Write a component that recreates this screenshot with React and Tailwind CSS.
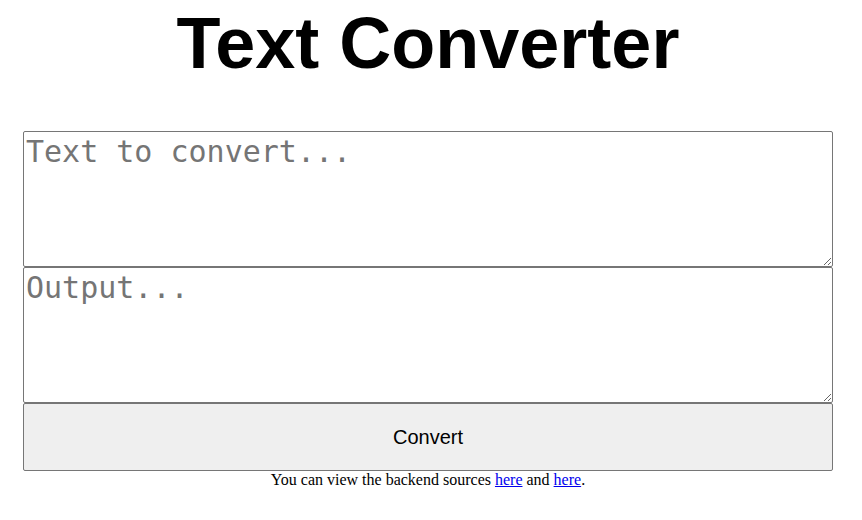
import { useState } from "react";

function App() {
  const [input, setInput] = useState("");
  const [output, setOutput] = useState("");

  const handleConvert = () => {
    setOutput(input);
  };

  return (
    <div className="w-[810px] ml-[23px] bg-white">
      <h1 className="m-0 pt-[2px] text-center text-[72px] font-bold leading-[normal] text-black font-['Liberation_Sans',Arial,sans-serif]">
        Text Converter
      </h1>

      <div className="mt-[47px] flex flex-col">
        <textarea
          value={input}
          onChange={(e) => setInput(e.target.value)}
          placeholder="Text to convert..."
          className="block w-[810px] h-[136px] border border-[#767676] rounded-[2px] p-[2px] text-[30px] leading-[normal] text-black placeholder:text-[#757575] font-['DejaVu_Sans_Mono',monospace] resize"
        />
        <textarea
          value={output}
          readOnly
          placeholder="Output..."
          className="block w-[810px] h-[136px] border border-[#767676] rounded-[2px] p-[2px] text-[30px] leading-[normal] text-black placeholder:text-[#757575] font-['DejaVu_Sans_Mono',monospace] resize"
        />
        <button
          onClick={handleConvert}
          className="block w-[810px] h-[68px] border border-[#767676] rounded-[2px] bg-[#efefef] text-[20px] text-black font-['Liberation_Sans',Arial,sans-serif]"
        >
          Convert
        </button>
      </div>

      <p className="m-0 text-center text-[16px] leading-[18px] text-black font-['Liberation_Serif','Times_New_Roman',serif]">
        You can view the backend sources{" "}
        <a href="#" className="text-[#0000ee] underline">
          here
        </a>{" "}
        and{" "}
        <a href="#" className="text-[#0000ee] underline">
          here
        </a>
        .
      </p>
    </div>
  );
}

export default App;
